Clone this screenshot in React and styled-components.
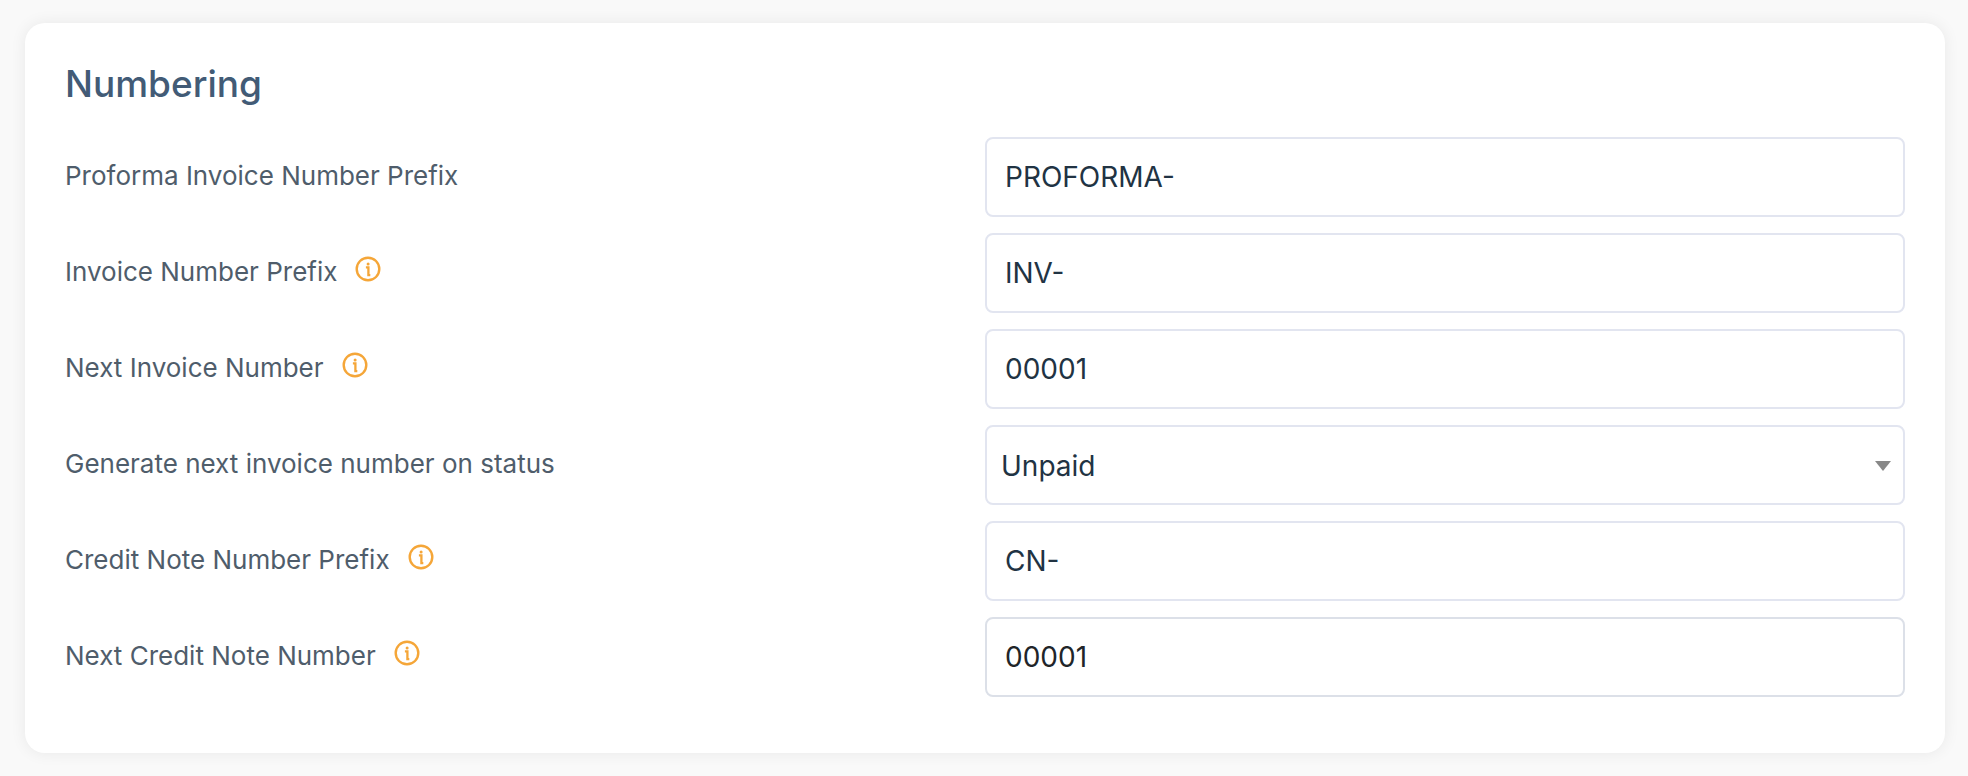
import { useState } from "react";
import styled, { ThemeProvider, createGlobalStyle } from "styled-components";

const theme = {
  background: "#f9f9f9",
  surface: "#ffffff",
  title: "#425b76",
  label: "#4f5d6b",
  text: "#213343",
  textPlain: "#212529",
  border: "#e2e5f0",
  borderPlain: "#dce0e8",
  accent: "#f5a638",
  arrow: "#888888",
};

const fields = [
  { id: "proformaPrefix", label: "Proforma Invoice Number Prefix", value: "PROFORMA-" },
  { id: "invoicePrefix", label: "Invoice Number Prefix", value: "INV-", info: true },
  { id: "nextInvoice", label: "Next Invoice Number", value: "00001", info: true },
  {
    id: "generateStatus",
    label: "Generate next invoice number on status",
    value: "Unpaid",
    options: ["Unpaid", "Paid"],
  },
  { id: "creditPrefix", label: "Credit Note Number Prefix", value: "CN-", info: true },
  { id: "nextCredit", label: "Next Credit Note Number", value: "00001", info: true, plain: true },
];

const InfoIcon = () => (
  <svg width="26" height="26" viewBox="0 0 26 26" fill="none" aria-hidden="true">
    <circle cx="13" cy="13" r="11.3" stroke="currentColor" strokeWidth="2.4" />
    <circle cx="13.1" cy="7.9" r="1.5" fill="currentColor" />
    <path d="M10.9 11.4h2.5v7.8h1.9" stroke="currentColor" strokeWidth="2.3" />
  </svg>
);

const Field = ({ field, value, onChange }) => (
  <Row>
    <LabelCell>
      <Label htmlFor={field.id}>{field.label}</Label>
      {field.info && (
        <InfoButton type="button" aria-label={`About ${field.label}`}>
          <InfoIcon />
        </InfoButton>
      )}
    </LabelCell>
    {field.options ? (
      <SelectWrap>
        <Select id={field.id} value={value} onChange={onChange}>
          {field.options.map((option) => (
            <option key={option}>{option}</option>
          ))}
        </Select>
        <Arrow viewBox="0 0 16 10" aria-hidden="true">
          <path d="M0 0h16L8 10z" fill="currentColor" />
        </Arrow>
      </SelectWrap>
    ) : (
      <Input id={field.id} type="text" value={value} onChange={onChange} $plain={field.plain} />
    )}
  </Row>
);

export default function App() {
  const [values, setValues] = useState(
    Object.fromEntries(fields.map((field) => [field.id, field.value]))
  );

  return (
    <ThemeProvider theme={theme}>
      <GlobalStyle />
      <Page>
        <Card>
          <Title>Numbering</Title>
          <Rows>
            {fields.map((field) => (
              <Field
                key={field.id}
                field={field}
                value={values[field.id]}
                onChange={(e) => setValues({ ...values, [field.id]: e.target.value })}
              />
            ))}
          </Rows>
        </Card>
      </Page>
    </ThemeProvider>
  );
}

const GlobalStyle = createGlobalStyle`
  * {
    box-sizing: border-box;
  }

  body {
    margin: 0;
    background-color: ${({ theme }) => theme.background};
    font-family: Inter, "Open Sans", sans-serif;
  }
`;

const Page = styled.main`
  padding: 23px 23px 23px 25px;
`;

const Card = styled.section`
  padding: 40px 40px 56px;
  border-radius: 20px;
  background-color: ${({ theme }) => theme.surface};
  box-shadow: 0 0 16px rgba(0, 0, 0, 0.07);
`;

const Title = styled.h2`
  margin: 0 0 32px;
  color: ${({ theme }) => theme.title};
  font-size: 37px;
  font-weight: 500;
  line-height: 42px;
`;

const Rows = styled.div`
  display: grid;
  gap: 16px;
`;

const Row = styled.div`
  display: grid;
  grid-template-columns: 1fr 1fr;
  align-items: center;
`;

const LabelCell = styled.div`
  display: flex;
  align-items: center;
  gap: 18px;
  padding-bottom: 2px;
`;

const Label = styled.label`
  color: ${({ theme }) => theme.label};
  font-size: 26px;
  font-weight: 400;
  line-height: 32px;
`;

const InfoButton = styled.button`
  display: flex;
  padding: 0 0 6px;
  border: none;
  background: none;
  color: ${({ theme }) => theme.accent};
  cursor: pointer;
`;

const Input = styled.input`
  width: 100%;
  height: 80px;
  padding: 0 18px;
  border: 2px solid ${({ theme, $plain }) => ($plain ? theme.borderPlain : theme.border)};
  border-radius: 8px;
  background-color: ${({ theme }) => theme.surface};
  color: ${({ theme, $plain }) => ($plain ? theme.textPlain : theme.text)};
  font-family: inherit;
  font-size: 28px;
  font-weight: 400;
`;

const SelectWrap = styled.div`
  position: relative;
`;

const Select = styled(Input).attrs({ as: "select" })`
  display: block;
  padding: 2px 48px 0 14px;
  appearance: none;
`;

const Arrow = styled.svg`
  position: absolute;
  top: 36px;
  right: 14px;
  width: 16px;
  height: 10px;
  color: ${({ theme }) => theme.arrow};
  pointer-events: none;
`;
